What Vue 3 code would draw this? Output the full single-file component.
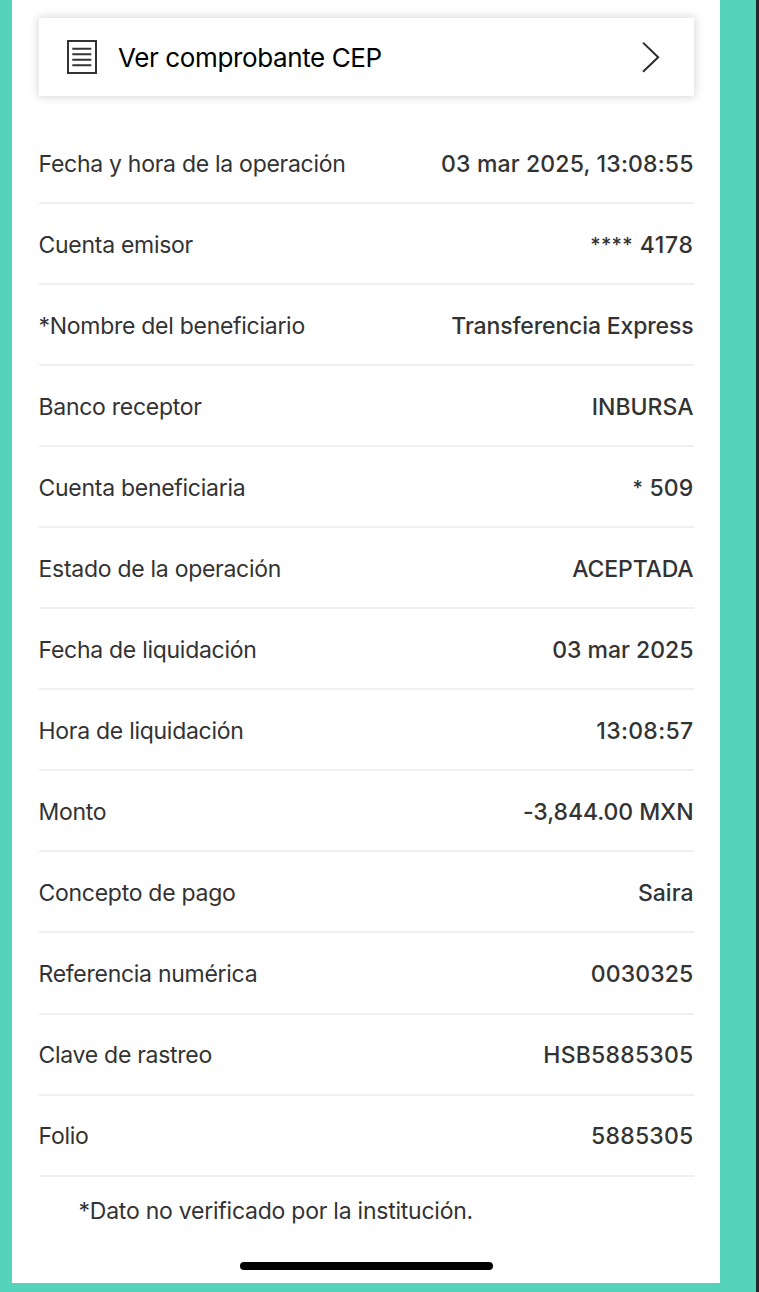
<script setup>
const rows = [
  { label: 'Fecha y hora de la operación', value: '03 mar 2025, 13:08:55', tone: 'date' },
  { label: 'Cuenta emisor', mask: '****', value: ' 4178', tone: 'account' },
  { label: '*Nombre del beneficiario', value: 'Transferencia Express', tone: 'name' },
  { label: 'Banco receptor', value: 'INBURSA' },
  { label: 'Cuenta beneficiaria', mask: '*', value: ' 509', tone: 'date' },
  { label: 'Estado de la operación', value: 'ACEPTADA', tone: 'name' },
  { label: 'Fecha de liquidación', value: '03 mar 2025' },
  { label: 'Hora de liquidación', value: '13:08:57', tone: 'time' },
  { label: 'Monto', value: '-3,844.00 MXN', tone: 'amount' },
  { label: 'Concepto de pago', value: 'Saira' },
  { label: 'Referencia numérica', value: '0030325', tone: 'date' },
  { label: 'Clave de rastreo', value: 'HSB5885305', tone: 'number' },
  { label: 'Folio', value: '5885305', tone: 'number' },
]
</script>

<template>
  <div class="frame">
    <main class="sheet">
      <button class="voucher" type="button">
        <svg class="doc" viewBox="0 0 30 34" fill="none" stroke="#333">
          <rect x="1" y="1" width="28" height="32" stroke-width="2" />
          <path d="M5.3 8.7H24.3M5.3 14.2H24.3M5.3 19.7H24.3M5.3 25.2H24.3" stroke-width="2" />
        </svg>
        <span class="voucher-text">Ver comprobante CEP</span>
        <svg class="chevron" viewBox="0 0 18 32" fill="none" stroke="#2b2b2b" stroke-width="2">
          <path d="M1 1.6L16.2 16.2L1 30.8" />
        </svg>
      </button>
      <dl class="details">
        <div v-for="row in rows" :key="row.label" class="row">
          <dt>{{ row.label }}</dt>
          <dd :class="row.tone"><span v-if="row.mask" class="mask">{{ row.mask }}</span>{{ row.value }}</dd>
        </div>
      </dl>
      <p class="note">*Dato no verificado por la institución.</p>
      <div class="home-bar"></div>
    </main>
  </div>
</template>

<style>
body {
  margin: 0;
}
</style>

<style scoped>
.frame {
  box-sizing: border-box;
  width: 759px;
  height: 1292px;
  padding: 0 36px 9px 12px;
  border-right: 3px solid #24292d;
  background: #56d3bb;
  font-family: Inter, "Liberation Sans", sans-serif;
  color: #333;
  overflow: hidden;
}
.sheet {
  box-sizing: border-box;
  height: 1283px;
  padding: 18px 26.5px 0;
  background: #fff;
  display: flex;
  flex-direction: column;
}
.voucher {
  box-sizing: border-box;
  flex: none;
  height: 78px;
  padding: 0 33.5px 0 28px;
  border: 0;
  background: #fff;
  box-shadow: 0 0 9px 1px rgba(0, 0, 0, 0.16);
  display: flex;
  align-items: center;
  font-family: inherit;
  text-align: left;
  color: #000;
}
.doc {
  width: 30px;
  height: 34px;
  flex: none;
}
.voucher-text {
  flex: 1;
  margin-left: 21.5px;
  padding-top: 1px;
  font-size: 26px;
  line-height: 32px;
  letter-spacing: -0.38px;
}
.chevron {
  width: 18px;
  height: 32px;
  flex: none;
}
.details {
  margin: 27px 0 0;
}
.row {
  box-sizing: border-box;
  height: 81.06px;
  padding-top: 2px;
  border-bottom: 2px solid #f0f0f0;
  display: flex;
  align-items: center;
  justify-content: space-between;
  font-size: 23px;
  line-height: 28px;
}
dt {
  letter-spacing: -0.28px;
}
dd {
  margin: 0;
  font-weight: 500;
}
.date {
  letter-spacing: 0.15px;
}
.name {
  letter-spacing: -0.14px;
}
.amount {
  letter-spacing: -0.06px;
}
.time {
  letter-spacing: 0.33px;
}
.account {
  letter-spacing: 0.6px;
}
.number {
  letter-spacing: 0.22px;
}
.mask {
  font-size: 20px;
  line-height: 0;
  letter-spacing: 0.3px;
  vertical-align: 1px;
}
.note {
  margin: 20px 0 0 40px;
  font-size: 23px;
  line-height: 28px;
  letter-spacing: -0.24px;
}
.home-bar {
  width: 253px;
  height: 8px;
  margin: 37.2px 0 0 201.5px;
  border-radius: 4px;
  background: #000;
}
</style>
